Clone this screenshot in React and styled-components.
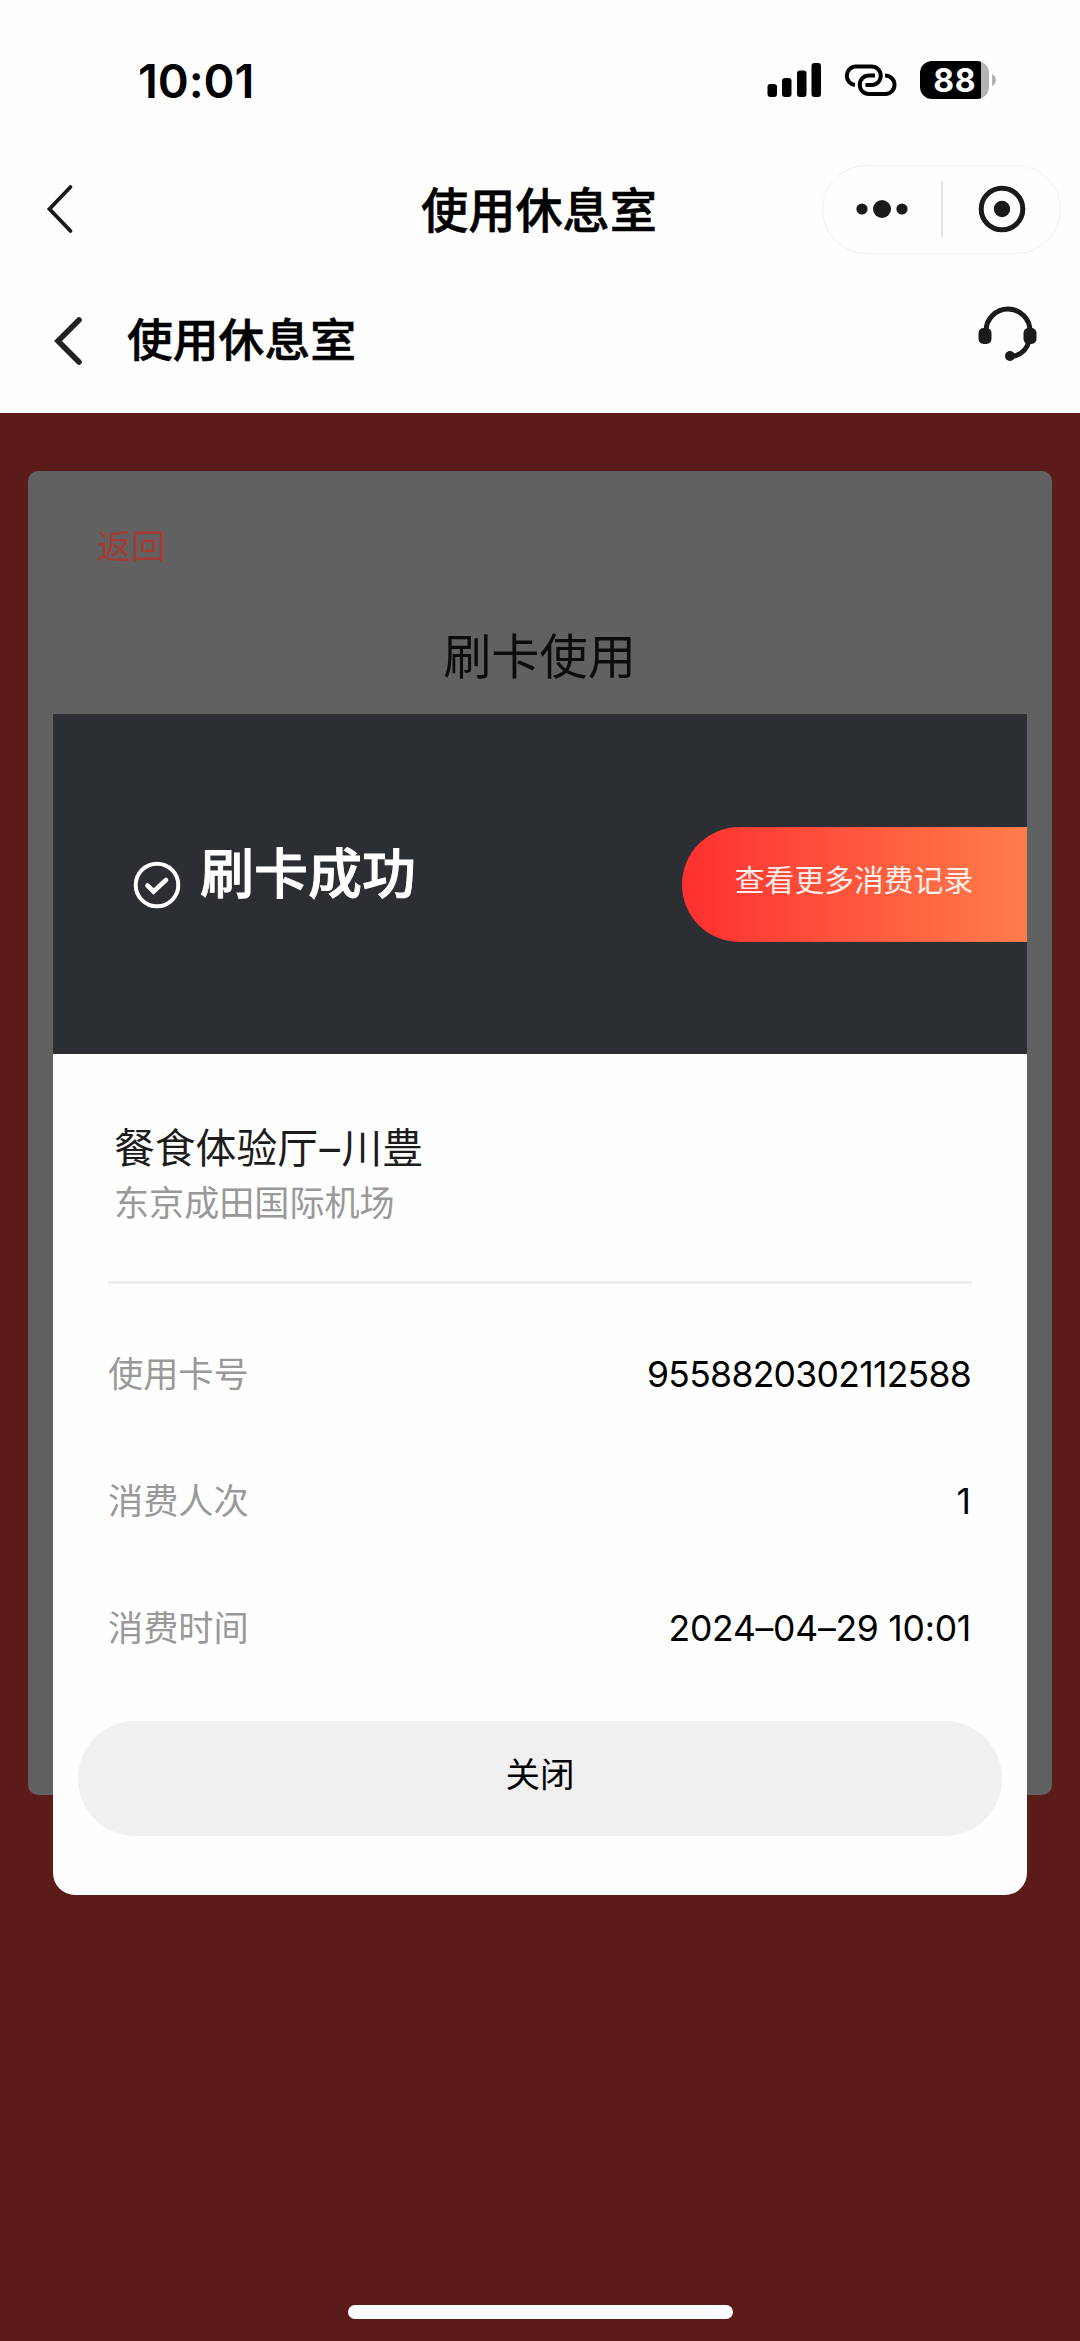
import styled, { createGlobalStyle } from "styled-components";

const GlobalStyle = createGlobalStyle`
    * {
        box-sizing: border-box;
    }

    body {
        margin: 0;
        background-color: #5b1b19;
        font-family: Inter, "Noto Sans CJK SC", sans-serif;
        color: #000;
    }
`;

const Screen = styled.div`
    width: 1080px;
    height: 2341px;
    display: flex;
    flex-direction: column;
    overflow: hidden;
`;

const Header = styled.header`
    height: 413px;
    background-color: #fefefe;
`;

const StatusBar = styled.div`
    height: 160px;
    display: flex;
    align-items: center;
    justify-content: space-between;
    padding: 0 83px 0 138px;
`;

const Time = styled.span`
    font-size: 47px;
    font-weight: 600;
    line-height: 60px;
    letter-spacing: -0.1px;
    padding-top: 1px;
`;

const StatusIcons = styled.div`
    display: flex;
    align-items: center;
    gap: 22px;
`;

const NavBar = styled.div`
    height: 98px;
    display: grid;
    grid-template-columns: 260px 1fr 260px;
    align-items: center;
    padding: 0 19px 0 0;
`;

const NavTitle = styled.h1`
    margin: 3px 0 0 17px;
    text-align: center;
    font-size: 47.2px;
    font-weight: 500;
    line-height: 60px;
    -webkit-text-stroke: 0.6px currentColor;
`;

const Capsule = styled.div`
    width: 239px;
    height: 89px;
    justify-self: end;
    border: 1.5px solid #f0f0f0;
    border-radius: 45px;
    display: flex;
    align-items: center;
    justify-content: space-between;
    padding: 0 34px 0 33px;
`;

const CapsuleLine = styled.div`
    width: 1.5px;
    height: 56px;
    margin-right: 4px;
    background-color: #e2e2e2;
`;

const SubBar = styled.div`
    height: 155px;
    display: flex;
    align-items: flex-start;
    padding: 47px 42px 0 53px;
`;

const SubTitle = styled.h2`
    margin: 6px auto 0 42px;
    font-size: 45.8px;
    font-weight: 500;
    line-height: 60px;
    -webkit-text-stroke: 0.6px currentColor;
`;

const SubBack = styled.svg`
    margin-top: 10px;
`;

const Body = styled.main`
    position: relative;
    flex: 1;
    padding: 58px 28px 0;
`;

const Card = styled.section`
    height: 1324px;
    border-radius: 10px;
    background-color: #616161;
    padding: 52px 69px;
`;

const BackLink = styled.a`
    display: block;
    font-size: 34.3px;
    line-height: 48px;
    color: #a43c33;
`;

const CardTitle = styled.h3`
    margin: 54px 1px 0 0;
    text-align: center;
    font-size: 48.2px;
    font-weight: 400;
    line-height: 64px;
    color: #0c0c0c;
`;

const Mask = styled.div`
    position: absolute;
    inset: 0;
    display: flex;
    flex-direction: column;
    align-items: center;
    justify-content: space-between;
    padding: 301px 0 22px;
`;

const Dialog = styled.div`
    width: 974px;
    height: 1181px;
    border-radius: 0 0 22px 22px;
    background-color: #fefefe;
    overflow: hidden;
`;

const Banner = styled.div`
    height: 340px;
    background-color: #2b2e33;
    display: flex;
    align-items: center;
    padding-left: 80px;
`;

const Success = styled.div`
    flex: 1;
    display: flex;
    align-items: center;
    gap: 19px;
    padding-top: 1px;
    color: #fff;
    font-size: 54px;
    font-weight: 500;
    line-height: 70px;
    -webkit-text-stroke: 0.9px currentColor;

    & span {
        margin-top: -19px;
    }
`;

const MoreButton = styled.button`
    width: 345px;
    height: 115px;
    border: 0;
    border-radius: 58px 0 0 58px;
    background: linear-gradient(90deg, #ff3030, #ff7d4b);
    color: #fff0ea;
    font-family: inherit;
    font-size: 29.8px;
    line-height: 44px;
    padding: 0 1px 9px 0;
`;

const Content = styled.div`
    padding: 65px 55px 0;
`;

const Venue = styled.div`
    padding: 0 6px 53px;
    border-bottom: 3px solid #efefef;
`;

const VenueName = styled.div`
    font-size: 40.8px;
    line-height: 58px;
    color: #1c1c1c;
`;

const Dash = styled.span`
    padding: 0 1.5px;
`;

const VenuePlace = styled.div`
    margin-top: 1px;
    font-size: 35.1px;
    line-height: 50px;
    color: #999;
`;

const Rows = styled.div`
    padding-top: 26px;
`;

const Row = styled.div`
    height: 127px;
    display: flex;
    align-items: center;
    justify-content: space-between;
`;

const Label = styled.span`
    font-size: 35.2px;
    line-height: 50px;
    color: #999;
`;

const Value = styled.span`
    padding: 2px 1px 0 0;
    font-size: 35.5px;
    line-height: 50px;
    letter-spacing: ${({ $spacing }) => $spacing || 0};
`;

const CloseButton = styled.button`
    display: block;
    width: 924px;
    height: 115px;
    margin: 30px auto 0;
    border: 0;
    border-radius: 58px;
    background-color: #f0f0f0;
    color: #000;
    font-family: inherit;
    font-size: 34.5px;
    line-height: 50px;
    padding: 0 0 8px;
`;

const HomeIndicator = styled.div`
    width: 385px;
    height: 14px;
    border-radius: 7px;
    background-color: #fff;
`;

const SignalIcon = () => (
    <svg width="55" height="36" viewBox="0 0 55 36">
        <rect x="0.5" y="22" width="9.5" height="13" rx="3" />
        <rect x="15" y="16" width="9.5" height="19" rx="3" />
        <rect x="30" y="8.5" width="9.5" height="26.5" rx="3" />
        <rect x="44.5" y="1" width="9.5" height="34" rx="3" />
    </svg>
);

const LinkIcon = () => (
    <svg width="54" height="34" viewBox="1 -0.5 54 34" fill="none" stroke="#000" strokeWidth="4">
        <path d="M12 21.5 A9.3 9.3 0 0 1 12.2 3 H28.5 A9.2 9.2 0 0 1 28.5 21.5 H22.5" />
        <path d="M42 12 A9.2 9.2 0 0 1 42.5 30.5 H26 A9.2 9.2 0 0 1 26 12 H32" />
    </svg>
);

const BatteryIcon = () => (
    <svg width="77" height="38" viewBox="0 0 77 38">
        <defs>
            <clipPath id="shell">
                <rect width="69" height="38" rx="12" />
            </clipPath>
        </defs>
        <g clipPath="url(#shell)">
            <rect width="61" height="38" />
            <rect x="61" width="8" height="38" fill="#b3b3b3" />
        </g>
        <path d="M72 13 Q76 15 76 19 T72 25 Z" fill="#b3b3b3" />
        <text
            x="34.8"
            y="30.8"
            textAnchor="middle"
            fontFamily="Inter"
            fontSize="32"
            fontWeight="700"
            letterSpacing="0.6"
            fill="#fff"
        >
            88
        </text>
    </svg>
);

const HeadsetIcon = () => (
    <svg width="60" height="58" viewBox="0 0 60 58" fill="none" stroke="#1a1a1a" strokeWidth="5">
        <path d="M8 26 A22 22 0 0 1 52 26" />
        <path d="M51 36 C49 44 43 50 34 51.5" />
        <rect x="0.5" y="23" width="13" height="16" rx="5" fill="#1a1a1a" stroke="none" />
        <rect x="45.5" y="23" width="13" height="16" rx="5" fill="#1a1a1a" stroke="none" />
        <circle cx="32" cy="51" r="5" fill="#1a1a1a" stroke="none" />
    </svg>
);

const CheckIcon = () => (
    <svg width="48" height="48" viewBox="0 0 48 48" fill="none" stroke="#fff" strokeWidth="4">
        <circle cx="24" cy="24" r="21.3" />
        <path d="M14.5 24.5 L20.5 30.5 L33 19" strokeLinecap="round" strokeWidth="4.6" />
    </svg>
);

const rows = [
    { label: "使用卡号", value: "9558820302112588", spacing: "-0.7px" },
    { label: "消费人次", value: "1" },
    { label: "消费时间", value: "2024–04–29 10:01", spacing: "-0.25px" },
];

const App = () => {
    return (
        <Screen>
            <GlobalStyle />
            <Header>
                <StatusBar>
                    <Time>10:01</Time>
                    <StatusIcons>
                        <SignalIcon />
                        <LinkIcon />
                        <BatteryIcon />
                    </StatusIcons>
                </StatusBar>

                <NavBar>
                    <svg width="80" height="50" viewBox="0 0 80 50" fill="none" stroke="#1a1a1a" strokeWidth="3.8">
                        <path d="M70.5 3 L49.5 25 L70.5 47" strokeLinecap="round" />
                    </svg>
                    <NavTitle>使用休息室</NavTitle>
                    <Capsule>
                        <svg width="54" height="20" viewBox="0 0 54 20" fill="#1a1a1a">
                            <circle cx="6" cy="10" r="5.6" />
                            <circle cx="26" cy="10" r="9" />
                            <circle cx="46" cy="10" r="5.6" />
                        </svg>
                        <CapsuleLine />
                        <svg width="48" height="48" viewBox="0 0 48 48">
                            <circle cx="24" cy="24" r="20.8" fill="none" stroke="#1a1a1a" strokeWidth="5" />
                            <circle cx="24" cy="24" r="8.2" fill="#1a1a1a" />
                        </svg>
                    </Capsule>
                </NavBar>

                <SubBar>
                    <SubBack width="32" height="52" viewBox="0 0 32 52" fill="none" stroke="#222" strokeWidth="5.6">
                        <path d="M26 5 L5 26 L26 47" strokeLinecap="round" />
                    </SubBack>
                    <SubTitle>使用休息室</SubTitle>
                    <HeadsetIcon />
                </SubBar>
            </Header>

            <Body>
                <Card>
                    <BackLink>返回</BackLink>
                    <CardTitle>刷卡使用</CardTitle>
                </Card>

                <Mask>
                    <Dialog>
                        <Banner>
                            <Success>
                                <CheckIcon />
                                <span>刷卡成功</span>
                            </Success>
                            <MoreButton>查看更多消费记录</MoreButton>
                        </Banner>

                        <Content>
                            <Venue>
                                <VenueName>餐食体验厅<Dash>–</Dash>川豊</VenueName>
                                <VenuePlace>东京成田国际机场</VenuePlace>
                            </Venue>
                            <Rows>
                                {rows.map(({ label, value, spacing }) => (
                                    <Row key={label}>
                                        <Label>{label}</Label>
                                        <Value $spacing={spacing}>{value}</Value>
                                    </Row>
                                ))}
                            </Rows>
                        </Content>

                        <CloseButton>关闭</CloseButton>
                    </Dialog>
                    <HomeIndicator />
                </Mask>
            </Body>
        </Screen>
    );
}

export default App;
